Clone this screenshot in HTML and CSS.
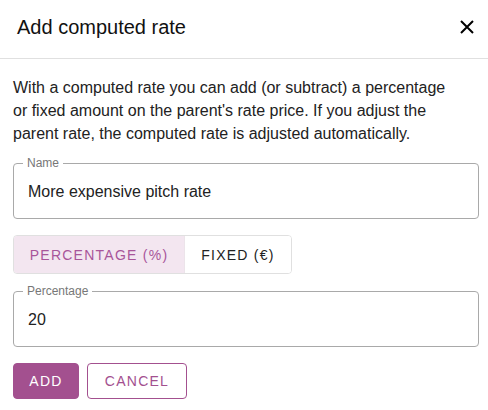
FILE: index.html
```html
<!DOCTYPE html>
<html>
<head>
<meta charset="utf-8">
<link rel="stylesheet" href="styles.css">
</head>
<body>
<div class="dialog">
  <header class="head">
    <h1 class="title">Add computed rate</h1>
    <button class="close" aria-label="Close">
      <svg width="14" height="14" viewBox="0 0 14 14"><path d="M1 1L13 13M13 1L1 13" stroke="#000" stroke-width="2" fill="none"/></svg>
    </button>
  </header>
  <div class="content">
    <p class="desc">With a computed rate you can add (or subtract) a percentage or fixed amount on the parent's rate price. If you adjust the parent rate, the computed rate is adjusted automatically.</p>
    <div class="field">
      <span class="label">Name</span>
      <div class="value">More expensive pitch rate</div>
    </div>
    <div class="toggle">
      <button class="tg on">Percentage (%)</button>
      <button class="tg off">Fixed (€)</button>
    </div>
    <div class="field">
      <span class="label">Percentage</span>
      <div class="value">20</div>
    </div>
    <div class="actions">
      <button class="btn primary">Add</button>
      <button class="btn outline">Cancel</button>
    </div>
  </div>
</div>
</body>
</html>
```
FILE: styles.css
```css
* { box-sizing: border-box; }
html, body { margin: 0; padding: 0; background: #fff; }
body { font-family: "Liberation Sans", Arial, sans-serif; color: #222; }
.dialog { width: 488px; height: 410px; }
.head {
  height: 59px;
  border-bottom: 1px solid #e0e0e0;
  display: flex;
  align-items: center;
  justify-content: space-between;
  padding: 0 14px 4px 17px;
}
.title { margin: 0; font-size: 20px; font-weight: 400; color: #111; }
.close { border: 0; background: none; padding: 0; display: flex; cursor: pointer; }
.content { padding: 17px 9px 0 13px; }
.desc { margin: 0 16px 0 0; font-size: 16px; line-height: 23px; color: #222; }
.field {
  position: relative;
  margin-top: 18px;
  border: 1px solid #a9a9a9;
  border-radius: 4px;
  padding: 0 14px;
  height: 56px;
  display: flex;
  align-items: center;
}
.field .label {
  position: absolute;
  left: 9px;
  top: -7px;
  font-size: 12px;
  line-height: 12px;
  color: #777;
  padding: 0 4px;
  background: #fff;
}
.field .value { font-size: 16px; color: #222; line-height: 20px; padding-top: 1px; }
.toggle + .field { margin-top: 17px; }
.toggle {
  margin-top: 16px;
  display: inline-flex;
  border: 1px solid #e0e0e0;
  border-radius: 4px;
  overflow: hidden;
  height: 39px;
}
.tg {
  font-family: inherit;
  font-size: 14px;
  text-transform: uppercase;
  letter-spacing: 1.25px;
  border: 0;
  background: #fff;
  color: #222;
  padding: 0;
}
.tg.on { background: #f3e6f0; color: #a8559a; width: 171px; border-right: 1px solid #ece4ea; }
.tg.off { width: 106px; }
.actions { margin-top: 16px; display: flex; gap: 8px; }
.btn {
  font-family: inherit;
  font-size: 14px;
  text-transform: uppercase;
  letter-spacing: 1.25px;
  height: 36px;
  border-radius: 4px;
  padding: 0;
}
.primary { background: #a3508f; color: #fff; border: 1px solid #a3508f; width: 66px; }
.outline { background: #fff; color: #a3508f; border: 1px solid #a3508f; width: 100px; }
```
